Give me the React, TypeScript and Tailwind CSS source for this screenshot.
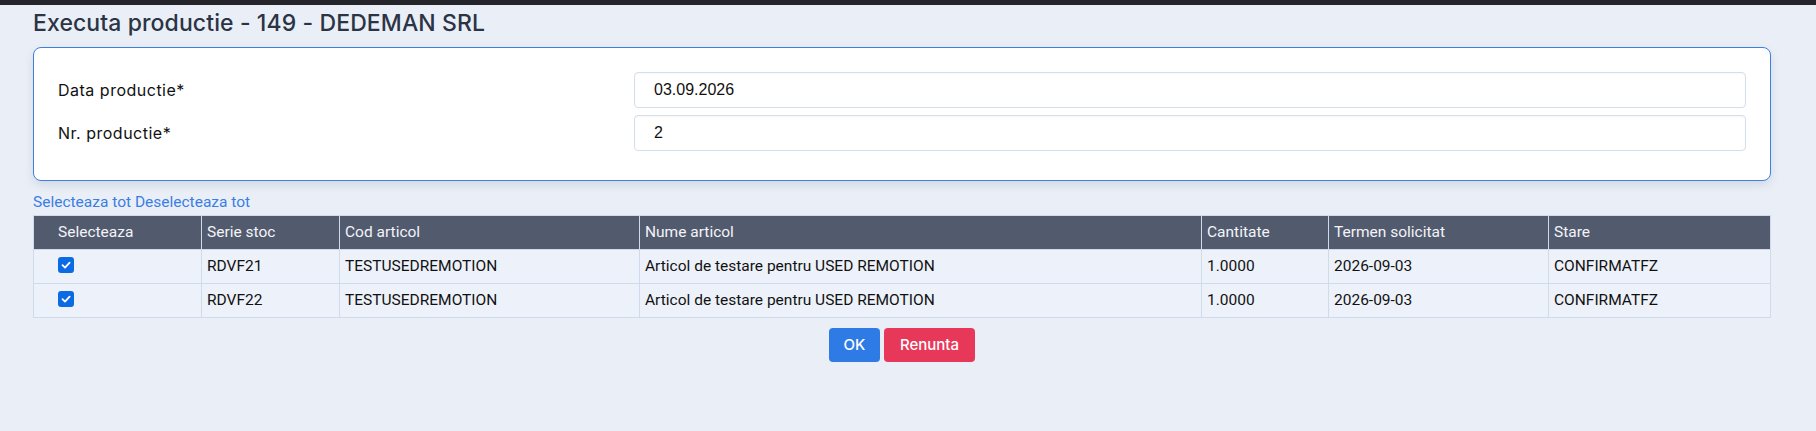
import React from "react";

type Row = {
  serie: string;
  cod: string;
  nume: string;
  cantitate: string;
  termen: string;
  stare: string;
};

const rows: Row[] = [
  {
    serie: "RDVF21",
    cod: "TESTUSEDREMOTION",
    nume: "Articol de testare pentru USED REMOTION",
    cantitate: "1.0000",
    termen: "2026-09-03",
    stare: "CONFIRMATFZ",
  },
  {
    serie: "RDVF22",
    cod: "TESTUSEDREMOTION",
    nume: "Articol de testare pentru USED REMOTION",
    cantitate: "1.0000",
    termen: "2026-09-03",
    stare: "CONFIRMATFZ",
  },
];

const headers = [
  "Selecteaza",
  "Serie stoc",
  "Cod articol",
  "Nume articol",
  "Cantitate",
  "Termen solicitat",
  "Stare",
];

function CheckMark() {
  return (
    <span className="mb-[4px] flex h-[16px] w-[16px] items-center justify-center rounded-[3px] bg-[#0b6be3]">
      <svg width="12" height="12" viewBox="0 0 12 12" fill="none">
        <path
          d="M2.5 6.2 L5 8.6 L9.6 3.6"
          stroke="white"
          strokeWidth="1.8"
          strokeLinecap="round"
          strokeLinejoin="round"
        />
      </svg>
    </span>
  );
}

function Field({ label, value }: { label: string; value: string }) {
  return (
    <div className="flex items-center">
      <div className="w-[576px] shrink-0 text-[16px] tracking-[0.5px] text-[#111] [font-family:Inter,'Noto_Sans',sans-serif]">
        {label}
      </div>
      <div className="flex h-[36px] flex-1 items-center rounded-[4px] border border-[#d5deeb] bg-white pl-[19px] text-[16px] text-[#111] shadow-[inset_0_1px_2px_rgba(0,0,0,0.04)] [font-family:'Liberation_Sans',Arial,sans-serif]">
        {value}
      </div>
    </div>
  );
}

export default function App() {
  const cell = "h-[34px] border border-[#cfdbea] pl-[5px] pr-[5px] align-middle";
  return (
    <div className="min-h-[431px] w-full bg-[#eaeff7]">
      <div className="h-[5px] w-full bg-[#25242b]" />
      <div className="pl-[33px] pr-[45px]">
        <h1 className="mt-[3px] h-[30px] text-[23px] font-medium leading-[30px] tracking-[0.1px] text-[#2b3445] [font-family:Inter,'Noto_Sans',sans-serif]">
          Executa productie - 149 - DEDEMAN SRL
        </h1>

        <div className="mt-[9px] flex flex-col gap-[7px] rounded-lg border border-[#3d80e0] bg-white px-[24px] pb-[29px] pt-[24px] shadow-[0_4px_10px_rgba(30,50,90,0.12)]">
          <Field label="Data productie*" value="03.09.2026" />
          <Field label="Nr. productie*" value="2" />
        </div>

        <div className="mt-[12px] text-[15.5px] leading-[19px] text-[#3a7ee4] [font-family:Roboto,sans-serif]">
          <a className="cursor-pointer">Selecteaza tot</a>{" "}
          <a className="cursor-pointer">Deselecteaza tot</a>
        </div>

        <table className="mt-[3px] w-full table-fixed border-collapse text-[15.5px] [font-family:Roboto,sans-serif]">
          <colgroup>
            <col className="w-[168px]" />
            <col className="w-[138px]" />
            <col className="w-[300px]" />
            <col className="w-[562px]" />
            <col className="w-[127px]" />
            <col className="w-[220px]" />
            <col />
          </colgroup>
          <thead>
            <tr className="bg-[#525a6e] text-[#f2f4f8]">
              {headers.map((h, i) => (
                <th
                  key={h}
                  className={`${cell} text-left font-normal ${i === 0 ? "pl-[24px]" : ""}`}
                >
                  {h}
                </th>
              ))}
            </tr>
          </thead>
          <tbody>
            {rows.map((r) => (
              <tr key={r.serie} className="bg-[#edf2fa] text-[#111]">
                <td className={`${cell} pl-[24px]`}>
                  <CheckMark />
                </td>
                <td className={cell}>{r.serie}</td>
                <td className={cell}>{r.cod}</td>
                <td className={cell}>{r.nume}</td>
                <td className={cell}>{r.cantitate}</td>
                <td className={cell}>{r.termen}</td>
                <td className={cell}>{r.stare}</td>
              </tr>
            ))}
          </tbody>
        </table>

        <div className="mt-[10px] flex justify-center gap-[4px] [font-family:Inter,'Noto_Sans',sans-serif]">
          <button className="flex h-[34px] w-[51px] items-center justify-center rounded-[4px] bg-[#2f7be5] text-[15px] font-medium text-white">
            OK
          </button>
          <button className="flex h-[34px] w-[91px] items-center justify-center rounded-[4px] bg-[#e8385a] text-[15px] font-medium text-white">
            Renunta
          </button>
        </div>
      </div>
    </div>
  );
}
